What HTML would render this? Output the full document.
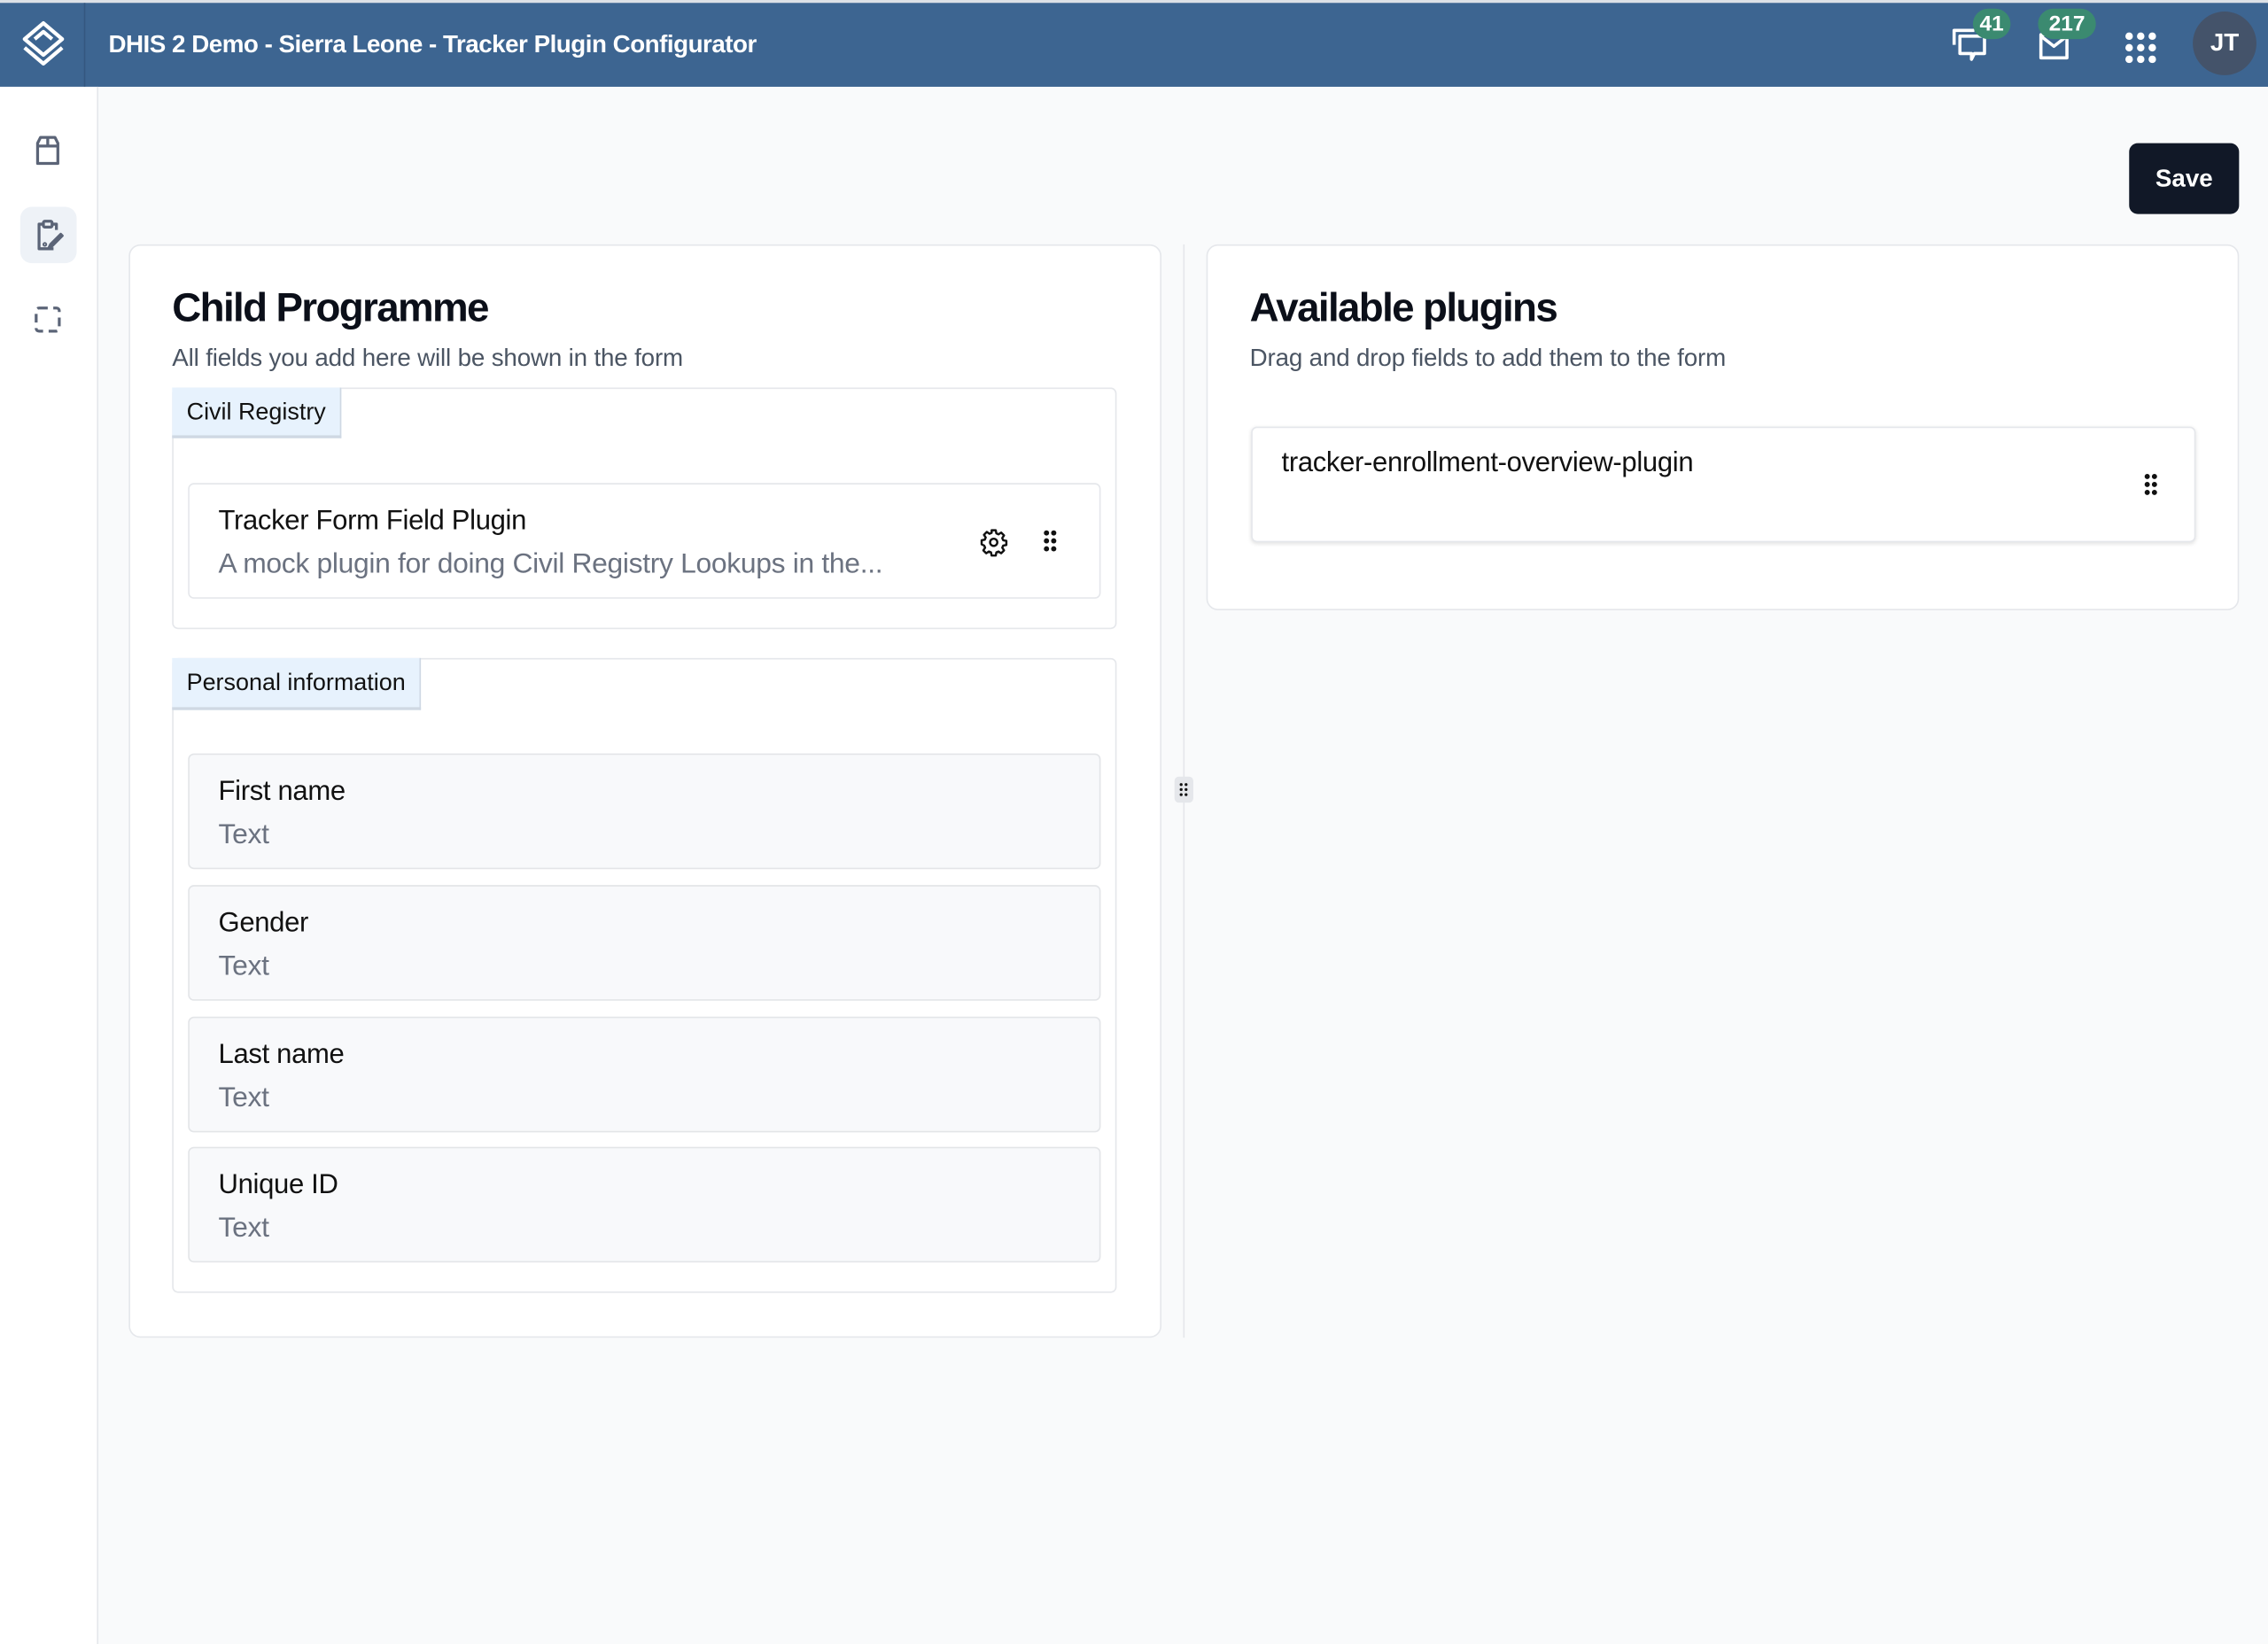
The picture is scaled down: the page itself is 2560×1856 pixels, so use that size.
<!DOCTYPE html>
<html><head><meta charset="utf-8">
<style>
html,body{margin:0;padding:0;width:2560px;height:1856px;overflow:hidden;background:#f9fafb;font-family:"Liberation Sans",sans-serif}
#w{position:absolute;left:0;top:0;width:1568px;height:1137px;transform:scale(1.632653);transform-origin:0 0;background:#f9fafb}
.a{position:absolute}
.hdr{left:0;top:0;width:1568px;height:60px;background:#3d6591;border-top:2px solid #dde1e6;box-sizing:border-box}
.card{background:#fff;border:1px solid #e5e7eb;border-radius:8px;box-sizing:border-box}
.sec{background:#fff;border:1px solid #e5e7eb;border-radius:4px;box-sizing:border-box}
.tag{background:#e7f2fd;border-right:1px solid #cfd8e3;border-bottom:2px solid #cfd8e3;box-sizing:border-box;font-size:16.5px;color:#111;padding:0 10px;line-height:34px}
.fld{border:1px solid #e3e5e8;border-radius:4px;box-sizing:border-box;background:#f8f9fb}
.t1{position:absolute;left:20px;top:15px;font-size:19px;color:#111;letter-spacing:-0.2px;white-space:nowrap}
.t2{position:absolute;left:20px;top:44px;font-size:19.5px;color:#6b7280;letter-spacing:-0.2px;white-space:nowrap}
h1{margin:0;font-size:28px;font-weight:bold;color:#0b0f19;letter-spacing:-1px}
.sub{font-size:17px;color:#4b5563;letter-spacing:-0.1px}
</style></head><body><div id="w">
<div class="a hdr"></div>
<div class="a" style="left:58px;top:2px;width:1px;height:58px;background:#34577f"></div>
<svg class="a" style="left:12px;top:13px" width="36" height="34" viewBox="0 0 36 34" fill="none" stroke="#fff" stroke-width="2.6" stroke-linejoin="round"><path d="M18 3 L31 14 L18 25 L5 14 Z"/><path d="M12 14 L18 9 L24 14"/><path d="M5 20 L18 31 L31 20"/></svg>
<div class="a" style="left:75px;top:21px;font-size:17px;font-weight:bold;color:#fff;letter-spacing:-0.3px">DHIS 2 Demo - Sierra Leone - Tracker Plugin Configurator</div>
<svg class="a" style="left:1349px;top:18px" width="28" height="26" viewBox="0 0 28 26" fill="none" stroke="#fff" stroke-width="2.2" stroke-linejoin="round"><path d="M2 13 V3 H16"/><path d="M6 7 H23 V19 H16 L14 23 V19 H6 Z"/></svg>
<div class="a" style="left:1364px;top:6px;width:26px;height:21px;border-radius:11px;background:#3b8a70;color:#fff;font-weight:bold;font-size:15px;text-align:center;line-height:21px">41</div>
<svg class="a" style="left:1408px;top:18px" width="26" height="26" viewBox="0 0 26 26" fill="none" stroke="#fff" stroke-width="2.2" stroke-linejoin="round"><rect x="3" y="6" width="18" height="16"/><path d="M3 7 L12 14 L21 7"/></svg>
<div class="a" style="left:1409px;top:6px;width:40px;height:21px;border-radius:11px;background:#3b8a70;color:#fff;font-weight:bold;font-size:15px;text-align:center;line-height:21px">217</div>
<svg class="a" style="left:1469px;top:22px" width="22" height="22" viewBox="0 0 22 22" fill="#fff"><circle cx="3" cy="3" r="2.6"/><circle cx="11" cy="3" r="2.6"/><circle cx="19" cy="3" r="2.6"/><circle cx="3" cy="11" r="2.6"/><circle cx="11" cy="11" r="2.6"/><circle cx="19" cy="11" r="2.6"/><circle cx="3" cy="19" r="2.6"/><circle cx="11" cy="19" r="2.6"/><circle cx="19" cy="19" r="2.6"/></svg>
<div class="a" style="left:1516px;top:8px;width:44px;height:44px;border-radius:50%;background:#44536a;color:#fff;font-size:17px;text-align:center;line-height:44px;font-weight:bold">JT</div>

<div class="a" style="left:0;top:60px;width:68px;height:1077px;background:#fff;border-right:1px solid #e5e7eb;box-sizing:border-box"></div>
<svg class="a" style="left:22px;top:93px" width="22" height="22" viewBox="0 0 22 22" fill="none" stroke="#5b6477" stroke-width="2" stroke-linejoin="round"><path d="M4 6 L6 2 H16 L18 6 V20 H4 Z"/><path d="M4 8 H18"/><path d="M11 2 V8"/></svg>
<div class="a" style="left:14px;top:143px;width:39px;height:39px;border-radius:8px;background:#eef2f7"></div>
<svg class="a" style="left:22px;top:151px" width="24" height="24" viewBox="0 0 24 24" fill="none" stroke="#5b6477" stroke-width="2" stroke-linejoin="round"><path d="M8 4 H5 V21 H15"/><path d="M14 4 H17 V8"/><rect x="8" y="2" width="6" height="4" rx="1"/><path d="M20 11 L13 18 L12 20 L14 19 L21 12 Z"/><circle cx="9" cy="18" r="0.6"/></svg>
<div class="a" style="left:24px;top:212px;width:18px;height:18px;border:2px dashed #5b6477;border-radius:3px;box-sizing:border-box"></div>

<div class="a" style="left:1472px;top:99px;width:76px;height:49px;border-radius:6px;background:#111827;color:#fff;font-weight:bold;font-size:17px;text-align:center;line-height:49px">Save</div>

<div class="a card" style="left:89px;top:169px;width:714px;height:756px"></div>
<div class="a" style="left:119px;top:197px"><h1>Child Programme</h1></div>
<div class="a sub" style="left:119px;top:238px">All fields you add here will be shown in the form</div>

<div class="a sec" style="left:119px;top:268px;width:653px;height:167px"></div>
<div class="a tag" style="left:119px;top:268px;height:35px">Civil Registry</div>
<div class="a sec" style="left:130px;top:334px;width:631px;height:80px">
<div class="t1">Tracker Form Field Plugin</div><div class="t2">A mock plugin for doing Civil Registry Lookups in the...</div>
<svg class="a" style="left:546px;top:30px" width="20" height="20" viewBox="0 0 24 24" fill="none" stroke="#111" stroke-width="1.8" stroke-linejoin="round"><path d="M10.3 2h3.4l.5 2.6 1.8.8 2.2-1.5 2.4 2.4-1.5 2.2.8 1.8 2.6.5v3.4l-2.6.5-.8 1.8 1.5 2.2-2.4 2.4-2.2-1.5-1.8.8-.5 2.6h-3.4l-.5-2.6-1.8-.8-2.2 1.5-2.4-2.4 1.5-2.2-.8-1.8L2 13.7v-3.4l2.6-.5.8-1.8-1.5-2.2 2.4-2.4 2.2 1.5 1.8-.8z"/><circle cx="12" cy="12" r="3"/></svg>
<svg class="a" style="left:590px;top:31px" width="10" height="16" viewBox="0 0 10 16" fill="#111"><circle cx="2.5" cy="2.5" r="1.8"/><circle cx="7.5" cy="2.5" r="1.8"/><circle cx="2.5" cy="8" r="1.8"/><circle cx="7.5" cy="8" r="1.8"/><circle cx="2.5" cy="13.5" r="1.8"/><circle cx="7.5" cy="13.5" r="1.8"/></svg>
</div>

<div class="a sec" style="left:119px;top:455px;width:653px;height:439px"></div>
<div class="a tag" style="left:119px;top:455px;height:36px">Personal information</div>
<div class="a fld" style="left:130px;top:521px;width:631px;height:80px"><div class="t1">First name</div><div class="t2">Text</div></div>
<div class="a fld" style="left:130px;top:612px;width:631px;height:80px"><div class="t1">Gender</div><div class="t2">Text</div></div>
<div class="a fld" style="left:130px;top:703px;width:631px;height:80px"><div class="t1">Last name</div><div class="t2">Text</div></div>
<div class="a fld" style="left:130px;top:793px;width:631px;height:80px"><div class="t1">Unique ID</div><div class="t2">Text</div></div>

<div class="a" style="left:818px;top:169px;width:1px;height:756px;background:#e5e7eb"></div>
<div class="a" style="left:812px;top:537px;width:13px;height:18px;border-radius:3px;background:#e5e7eb"></div>
<svg class="a" style="left:815px;top:541px" width="7" height="10" viewBox="0 0 7 10" fill="#111"><circle cx="1.6" cy="1.5" r="1"/><circle cx="5" cy="1.5" r="1"/><circle cx="1.6" cy="5" r="1"/><circle cx="5" cy="5" r="1"/><circle cx="1.6" cy="8.5" r="1"/><circle cx="5" cy="8.5" r="1"/></svg>

<div class="a card" style="left:834px;top:169px;width:714px;height:253px"></div>
<div class="a" style="left:864px;top:197px"><h1>Available plugins</h1></div>
<div class="a sub" style="left:864px;top:238px">Drag and drop fields to add them to the form</div>
<div class="a sec" style="left:865px;top:295px;width:653px;height:80px;box-shadow:0 1px 3px rgba(0,0,0,0.12)">
<div class="t1" style="top:14px">tracker-enrollment-overview-plugin</div>
<svg class="a" style="left:616px;top:31px" width="10" height="16" viewBox="0 0 10 16" fill="#111"><circle cx="2.5" cy="2.5" r="1.8"/><circle cx="7.5" cy="2.5" r="1.8"/><circle cx="2.5" cy="8" r="1.8"/><circle cx="7.5" cy="8" r="1.8"/><circle cx="2.5" cy="13.5" r="1.8"/><circle cx="7.5" cy="13.5" r="1.8"/></svg>
</div>
</div></body></html>
